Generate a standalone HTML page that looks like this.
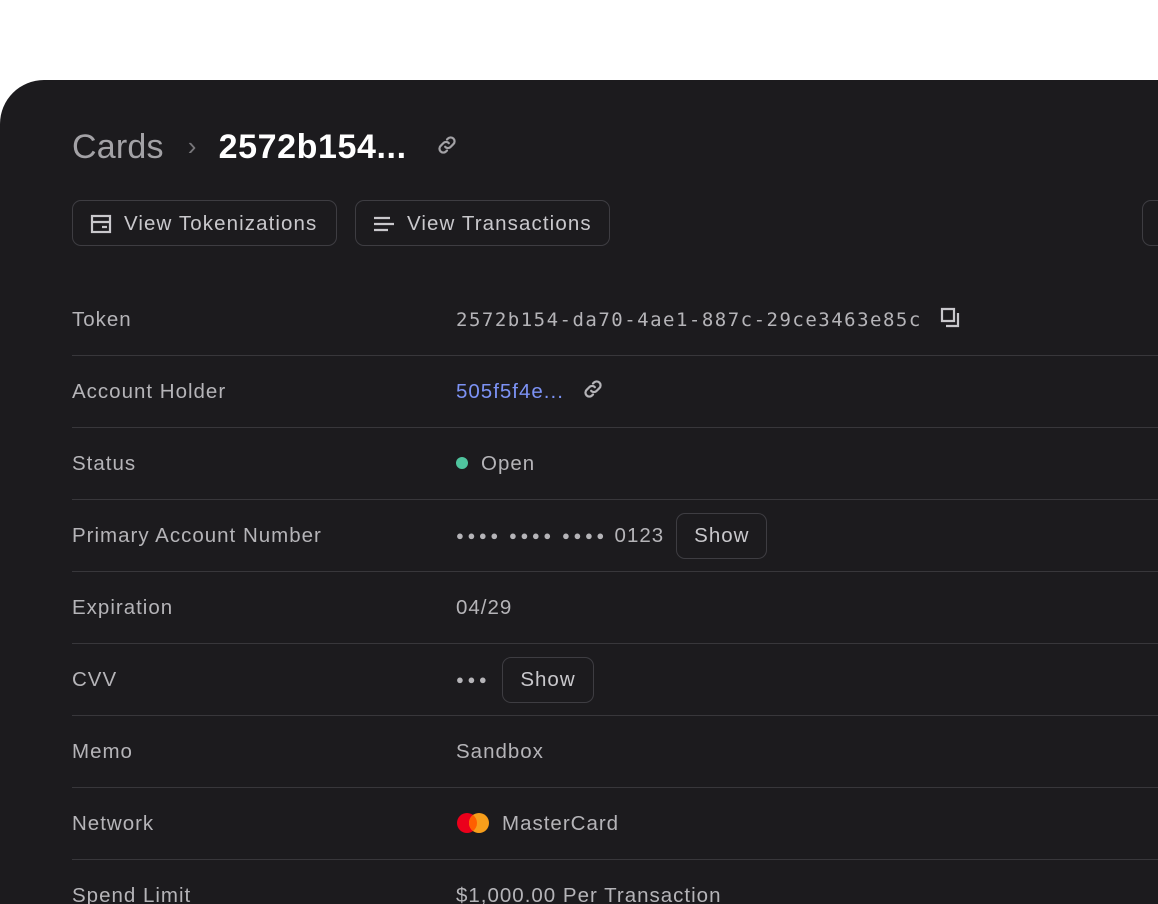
<!DOCTYPE html><html style="height:904px;overflow:hidden"><head><style>
body{margin:0;width:1158px;height:904px;background:#fff;overflow:hidden;font-family:"Liberation Sans",sans-serif;position:relative}
.card{position:absolute;left:0;top:80px;width:1200px;height:824px;background:#1c1b1e;border-top-left-radius:44px}
.bc{position:absolute;left:72px;top:128px;font-size:34px;letter-spacing:0.2px;white-space:nowrap}
.btn{position:absolute;top:200px;height:46px;border:1px solid #3e3d42;border-radius:9px;box-sizing:border-box;color:#c9c8cc;font-size:20.5px;line-height:46px;letter-spacing:1.1px;white-space:nowrap}
.row{position:absolute;left:72px;width:1100px;height:72px;border-bottom:1px solid #38373b;box-sizing:border-box;color:#b5b4b8;font-size:20.5px;letter-spacing:1px}
.row .l{position:absolute;left:0;top:0;line-height:72px}
.row .v{position:absolute;left:384px;top:0;line-height:72px;color:#b5b4b8;white-space:nowrap}
.sb{display:inline-block;border:1px solid #3e3d42;border-radius:9px;height:46px;line-height:44px;padding:0 17px;box-sizing:border-box;vertical-align:middle;color:#c9c8cc;margin-left:12px;position:relative;top:-1px}
.dots{letter-spacing:3.6px;font-size:13px;position:relative;top:-2px}
</style></head><body>
<div class="card"></div>
<div class="bc"><span style="color:#a3a2a6">Cards</span><span style="color:#77767a;font-size:26px;margin:0 22px 0 24px;position:relative;top:-3px">&#8250;</span><span style="color:#fff;font-weight:bold;letter-spacing:0.6px">2572b154...</span>
<svg style="margin-left:20px;vertical-align:2px" width="22" height="22" viewBox="0 0 24 24" fill="none" stroke="#a3a2a6" stroke-width="2.4" stroke-linecap="round"><path d="M10 14a4 4 0 0 0 6 0l3-3a4 4 0 0 0-6-6l-1 1M14 10a4 4 0 0 0-6 0l-3 3a4 4 0 0 0 6 6l1-1"/></svg></div>
<div class="btn" style="left:72px;width:265px;padding-left:51px"><svg style="position:absolute;left:17px;top:13px" width="22" height="20" viewBox="0 0 22 20" fill="none" stroke="#c9c8cc" stroke-width="2.2"><rect x="2" y="2" width="18" height="16"/><path d="M2 8h18M12 13h5"/></svg>View Tokenizations</div>
<div class="btn" style="left:355px;width:255px;padding-left:51px"><svg style="position:absolute;left:17px;top:14px" width="22" height="18" viewBox="0 0 22 18" stroke="#c9c8cc" stroke-width="2.2"><path d="M1 3h16M1 9h20M1 15h14"/></svg>View Transactions</div>
<div class="btn" style="left:1142px;width:60px"></div>
<div class="row" style="top:284px"><span class="l">Token</span><span class="v" style="font-family:'DejaVu Sans Mono','Liberation Mono',monospace;font-size:19px;letter-spacing:1.5px">2572b154-da70-4ae1-887c-29ce3463e85c<svg style="margin-left:18px;vertical-align:-3px" width="22" height="22" viewBox="0 0 22 22" fill="none" stroke="#c9c8cc" stroke-width="2.2"><path d="M2 2h12v12H2z M18 6v13H6"/></svg></span></div>
<div class="row" style="top:356px"><span class="l">Account Holder</span><span class="v"><span style="color:#7c92f4">505f5f4e...</span><svg style="margin-left:18px;vertical-align:-2px" width="22" height="22" viewBox="0 0 24 24" fill="none" stroke="#b5b4b8" stroke-width="2.4" stroke-linecap="round"><path d="M10 14a4 4 0 0 0 6 0l3-3a4 4 0 0 0-6-6l-1 1M14 10a4 4 0 0 0-6 0l-3 3a4 4 0 0 0 6 6l1-1"/></svg></span></div>
<div class="row" style="top:428px"><span class="l">Status</span><span class="v"><span style="display:inline-block;width:12px;height:12px;border-radius:50%;background:#4fc49e;margin-right:13px;vertical-align:1px"></span>Open</span></div>
<div class="row" style="top:500px"><span class="l">Primary Account Number</span><span class="v"><span class="dots">&#9679;&#9679;&#9679;&#9679; &#9679;&#9679;&#9679;&#9679; &#9679;&#9679;&#9679;&#9679;</span> 0123<span class="sb">Show</span></span></div>
<div class="row" style="top:572px"><span class="l">Expiration</span><span class="v">04/29</span></div>
<div class="row" style="top:644px"><span class="l">CVV</span><span class="v"><span class="dots">&#9679;&#9679;&#9679;</span><span class="sb">Show</span></span></div>
<div class="row" style="top:716px"><span class="l">Memo</span><span class="v">Sandbox</span></div>
<div class="row" style="top:788px"><span class="l">Network</span><span class="v"><svg style="vertical-align:-4px;margin-right:12px" width="34" height="22" viewBox="0 0 34 22"><circle cx="11" cy="11" r="10" fill="#eb001b"/><circle cx="23" cy="11" r="10" fill="#f79e1b"/><path d="M17 3a10 10 0 0 1 0 16a10 10 0 0 1 0-16z" fill="#ff5f00"/></svg>MasterCard</span></div>
<div class="row" style="top:860px;height:44px;border:0"><span class="l">Spend Limit</span><span class="v">$1,000.00 Per Transaction</span></div>
</body></html>
